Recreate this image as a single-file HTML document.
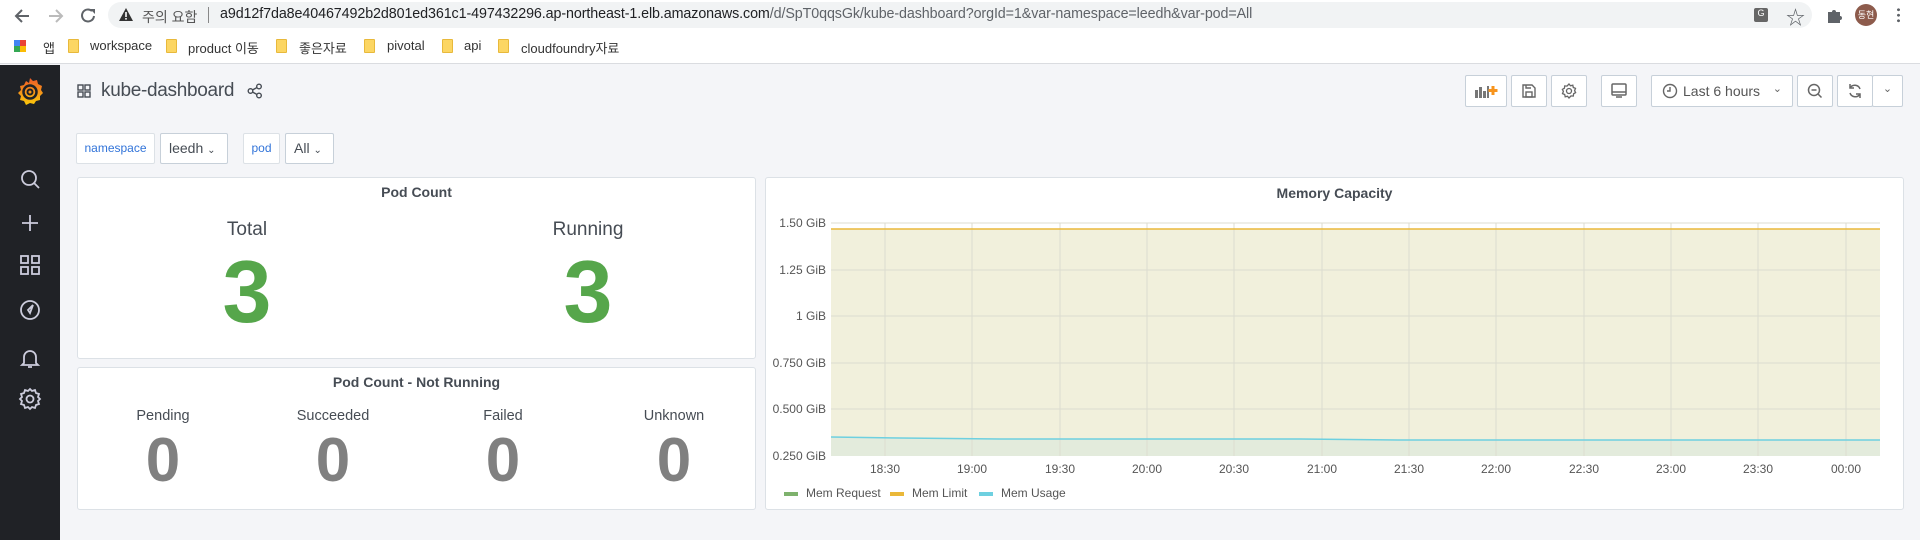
<!DOCTYPE html>
<html><head><meta charset="utf-8"><style>
*{margin:0;padding:0;box-sizing:border-box}
body{width:1920px;height:540px;overflow:hidden;background:#f4f5f8;font-family:"Liberation Sans","Noto Sans CJK KR",sans-serif;position:relative;color:#464c54}
.abs{position:absolute}
.btn{position:absolute;top:75px;height:32px;border:1px solid #c7d0d9;background:#fff;border-radius:2px;display:flex;align-items:center;justify-content:center}
.panel{position:absolute;background:#fff;border:1px solid #dce1e6;border-radius:3px}
.pt{position:absolute;left:0;right:0;text-align:center;font-size:14px;font-weight:bold;color:#464c54}
.c{position:absolute;transform:translateX(-50%);text-align:center;white-space:nowrap}
.bm{position:absolute;top:38px;font-size:13px;color:#333}
.fold{position:absolute;top:39px;width:11px;height:14px;background:#fcd663;border:1px solid #e8b93b;border-radius:1px}
</style></head><body>
<!-- chrome top -->
<div class="abs" style="left:0;top:0;width:1920px;height:64px;background:#fff;border-bottom:1px solid #dadce0"></div>
<svg class="abs" style="left:12px;top:6px" width="100" height="20" viewBox="0 0 100 20"><path d="M17 10H4M10 4l-6 6 6 6" stroke="#5f6368" stroke-width="2" fill="none"/><path d="M37 10h13M44 4l6 6-6 6" stroke="#bbb" stroke-width="2" fill="none"/><path d="M80 5a6 6 0 1 0 2 5" stroke="#5f6368" stroke-width="2" fill="none"/><path d="M78 3h5v5z" fill="#5f6368"/></svg>
<div class="abs" style="left:108px;top:2px;width:1704px;height:26px;background:#f1f3f4;border-radius:13px"></div>
<svg class="abs" style="left:119px;top:8px" width="14" height="13"><path d="M7 0L14 13H0z" fill="#333"/><rect x="6.2" y="4" width="1.6" height="5" fill="#fff"/><rect x="6.2" y="10" width="1.6" height="1.6" fill="#fff"/></svg>
<div class="abs" style="left:142px;top:7px;font-size:14px;color:#555">주의 요함</div>
<div class="abs" style="left:208px;top:7px;width:1px;height:16px;background:#888"></div>
<div class="abs" style="left:220px;top:6px;font-size:14.3px;letter-spacing:-0.1px;color:#202124">a9d12f7da8e40467492b2d801ed361c1-497432296.ap-northeast-1.elb.amazonaws.com<span style="color:#5f6368">/d/SpT0qqsGk/kube-dashboard?orgId=1&amp;var-namespace=leedh&amp;var-pod=All</span></div>
<div class="abs" style="left:1754px;top:8px;width:14px;height:14px;background:#666;border-radius:2px;color:#fff;font-size:9px;text-align:center">G</div>
<div class="abs" style="left:1786px;top:3px;font-size:19px;color:#5f6368">☆</div>
<svg class="abs" style="left:1826px;top:7px" width="16" height="16"><path d="M2 5h4a2 2 0 1 1 4 0h4v4a2 2 0 1 1 0 4v3H2z" fill="#5f6368"/></svg>
<div class="abs" style="left:1855px;top:4px;width:22px;height:22px;border-radius:50%;background:#8d5b4c;color:#fff;font-size:9px;text-align:center;line-height:22px">동현</div>
<div class="abs" style="left:1897px;top:7px;width:3px;height:16px;background:radial-gradient(circle,#5f6368 1.3px,transparent 1.6px) 0 0/3px 5.5px"></div>
<!-- bookmarks -->
<div class="abs" style="left:14px;top:40px;width:12px;height:12px;background:conic-gradient(#ea4335 0 25%,#fbbc05 0 50%,#34a853 0 75%,#4285f4 0);"></div>
<div class="bm" style="left:43px">앱</div>
<div class="fold" style="left:68px"></div><div class="bm" style="left:90px">workspace</div>
<div class="fold" style="left:166px"></div><div class="bm" style="left:188px">product 이동</div>
<div class="fold" style="left:276px"></div><div class="bm" style="left:299px">좋은자료</div>
<div class="fold" style="left:364px"></div><div class="bm" style="left:387px">pivotal</div>
<div class="fold" style="left:442px"></div><div class="bm" style="left:464px">api</div>
<div class="fold" style="left:498px"></div><div class="bm" style="left:521px">cloudfoundry자료</div>
<!-- sidebar -->
<div class="abs" style="left:0;top:65px;width:60px;height:475px;background:#202226"></div>
<svg class="abs" style="left:16px;top:77px" width="28" height="28" viewBox="0 0 28 28"><defs><linearGradient id="g" x1="0" y1="1" x2="0" y2="0"><stop offset="0" stop-color="#fbca0a"/><stop offset="1" stop-color="#f05a28"/></linearGradient></defs><path d="M14 1l3 3 4-1 1 4 4 2-1 4 2 3-3 3v4l-4 1-2 3-4-1-4 2-2-4-4-1 1-4-3-3 3-3-1-4 4-1 2-4 3 2z" fill="url(#g)"/><circle cx="14" cy="15" r="6.5" fill="none" stroke="#202226" stroke-width="2.5"/><circle cx="14" cy="15" r="2.5" fill="none" stroke="#202226" stroke-width="2"/></svg>
<svg class="abs" style="left:18px;top:167px" width="26" height="250" viewBox="0 0 26 250" fill="none" stroke="#ccccdc" stroke-width="1.8">
<circle cx="11" cy="11" r="7"/><path d="M16 16l5 5"/>
<path d="M12 48v16M4 56h16"/>
<rect x="3" y="89" width="7" height="7"/><rect x="14" y="89" width="7" height="7"/><rect x="3" y="100" width="7" height="7"/><rect x="14" y="100" width="7" height="7"/>
<circle cx="12" cy="143" r="9"/><path d="M15 138l-3 8-2-3z"/>
<path d="M6 196v-6a6 6 0 0 1 12 0v6l2 2H4zM10 200h4"/>
<circle cx="12" cy="232" r="3.5"/><path d="M12 222l2 2 3-1 1 3 3 1-1 3 2 2-2 2 1 3-3 1-1 3-3-1-2 2-2-2-3 1-1-3-3-1 1-3-2-2 2-2-1-3 3-1 1-3 3 1z"/>
</svg>
<!-- title -->
<svg class="abs" style="left:77px;top:84px" width="14" height="14" fill="none" stroke="#464c54" stroke-width="1.4"><rect x="1" y="1" width="5" height="5"/><rect x="8" y="1" width="5" height="5"/><rect x="1" y="8" width="5" height="5"/><rect x="8" y="8" width="5" height="5"/></svg>
<div class="abs" style="left:101px;top:80px;font-size:19px;letter-spacing:-0.3px;color:#464c54">kube-dashboard</div>
<svg class="abs" style="left:247px;top:83px" width="16" height="16" fill="none" stroke="#464c54" stroke-width="1.4"><circle cx="12" cy="3.5" r="2.3"/><circle cx="3.5" cy="8" r="2.3"/><circle cx="12" cy="12.5" r="2.3"/><path d="M5.5 7l4.5-2.5M5.5 9l4.5 2.5"/></svg>
<!-- toolbar -->
<div class="btn" style="left:1465px;width:42px"><svg width="24" height="16"><rect x="1" y="7" width="3" height="8" fill="#777"/><rect x="5" y="4" width="3" height="11" fill="#777"/><rect x="9" y="8" width="3" height="7" fill="#777"/><rect x="13" y="3" width="2" height="12" fill="#777"/><path d="M19 3v9M14.5 7.5h9" stroke="#f7941d" stroke-width="3"/></svg></div>
<div class="btn" style="left:1511px;width:36px"><svg width="16" height="16" fill="none" stroke="#666" stroke-width="1.4"><path d="M2 2h9l3 3v9H2z"/><rect x="5" y="9" width="6" height="5"/><path d="M5 2v3h5"/></svg></div>
<div class="btn" style="left:1551px;width:36px"><svg width="16" height="16" fill="none" stroke="#666" stroke-width="1.3"><circle cx="8" cy="8" r="2.5"/><path d="M8 1l1.5 1.8 2.3-.6.5 2.3 2.2.9-.9 2.2 1 2-2 1.2-.3 2.3-2.3-.2L8 15l-1.5-1.8-2.3.6-.5-2.3-2.2-.9.9-2.2-1-2 2-1.2.3-2.3 2.3.2z"/></svg></div>
<div class="btn" style="left:1601px;width:36px"><svg width="18" height="16" fill="none" stroke="#666" stroke-width="1.5"><rect x="2" y="1" width="14" height="11" rx="1"/><path d="M2 9h14M6 14h6"/></svg></div>
<div class="btn" style="left:1651px;width:142px;justify-content:flex-start;padding-left:10px"><svg width="16" height="16" fill="none" stroke="#666" stroke-width="1.4"><circle cx="8" cy="8" r="6.5"/><path d="M8 4v4H5"/></svg><span style="font-size:14px;color:#555;margin-left:5px">Last 6 hours</span><span style="position:absolute;right:10px;top:6px;font-size:11px;color:#666">&#8964;</span></div>
<div class="btn" style="left:1797px;width:36px"><svg width="16" height="16" fill="none" stroke="#666" stroke-width="1.5"><circle cx="7" cy="7" r="5.5"/><path d="M4.5 7h5M11 11l3.5 3.5"/></svg></div>
<div class="btn" style="left:1837px;width:36px"><svg width="16" height="16" fill="none" stroke="#666" stroke-width="1.5"><path d="M13 6A5.5 5.5 0 0 0 3 5M3 10a5.5 5.5 0 0 0 10 1"/><path d="M3 1v4h4M13 15v-4H9"/></svg></div>
<div class="btn" style="left:1872px;width:31px"><span style="font-size:11px;color:#666;margin-top:-6px">&#8964;</span></div>
<!-- filters -->
<div class="abs" style="left:76px;top:133px;width:79px;height:31px;border:1px solid #dce1e6;background:#fff;border-radius:2px;font-size:12px;color:#3274d9;text-align:center;line-height:29px">namespace</div>
<div class="abs" style="left:160px;top:133px;width:68px;height:31px;border:1px solid #c7d0d9;background:#fff;border-radius:2px;font-size:14px;color:#464c54;line-height:29px;padding-left:8px">leedh <span style="font-size:10px">&#8964;</span></div>
<div class="abs" style="left:243px;top:133px;width:37px;height:31px;border:1px solid #dce1e6;background:#fff;border-radius:2px;font-size:12px;color:#3274d9;text-align:center;line-height:29px">pod</div>
<div class="abs" style="left:285px;top:133px;width:49px;height:31px;border:1px solid #c7d0d9;background:#fff;border-radius:2px;font-size:14px;color:#464c54;line-height:29px;padding-left:8px">All <span style="font-size:10px">&#8964;</span></div>
<!-- Pod Count -->
<div class="panel" style="left:77px;top:177px;width:679px;height:182px">
<div class="pt" style="top:6px">Pod Count</div>
<div class="c" style="left:169px;top:41px;font-size:19px">Total</div>
<div class="c" style="left:510px;top:41px;font-size:19px">Running</div>
<div class="c" style="left:169px;top:63px;font-size:88px;font-weight:bold;color:#56a64b">3</div>
<div class="c" style="left:510px;top:63px;font-size:88px;font-weight:bold;color:#56a64b">3</div>
</div>
<div class="panel" style="left:77px;top:367px;width:679px;height:143px">
<div class="pt" style="top:6px">Pod Count - Not Running</div>
<div class="c" style="left:85px;top:40px;font-size:14.5px">Pending</div>
<div class="c" style="left:255px;top:40px;font-size:14.5px">Succeeded</div>
<div class="c" style="left:425px;top:40px;font-size:14.5px">Failed</div>
<div class="c" style="left:596px;top:40px;font-size:14.5px">Unknown</div>
<div class="c" style="left:85px;top:57px;font-size:62px;font-weight:bold;color:#808080">0</div>
<div class="c" style="left:255px;top:57px;font-size:62px;font-weight:bold;color:#808080">0</div>
<div class="c" style="left:425px;top:57px;font-size:62px;font-weight:bold;color:#808080">0</div>
<div class="c" style="left:596px;top:57px;font-size:62px;font-weight:bold;color:#808080">0</div>
</div>
<!-- Memory -->
<div class="panel" style="left:765px;top:177px;width:1139px;height:333px">
<div class="pt" style="top:7px">Memory Capacity</div>
</div>
<svg class="abs" style="left:765px;top:177px" width="1139" height="333" font-family="Liberation Sans, sans-serif" font-size="12" fill="#555">
<g transform="translate(-765,-177)">
<rect x="831" y="229" width="1049" height="227" fill="#f1f0dc"/>
<path d="M831 437 L900 438 L1000 439 L1300 439 L1400 440 L1880 440 L1880 456 L831 456z" fill="#e3ebdc"/>
<g stroke="#dcdcd0" stroke-width="1">
<path d="M831 223H1880M831 270H1880M831 316H1880M831 363H1880M831 409H1880"/>
<path d="M885 223V456M972 223V456M1060 223V456M1147 223V456M1234 223V456M1322 223V456M1409 223V456M1496 223V456M1584 223V456M1671 223V456M1758 223V456M1846 223V456"/>
</g>
<path d="M831 229H1880" stroke="#eab839" stroke-width="1.5"/>
<path d="M831 437 L900 438 L1000 439 L1300 439 L1400 440 L1880 440" stroke="#6ed0e0" stroke-width="1.5" fill="none"/>
<g text-anchor="end"><text x="826" y="227">1.50 GiB</text><text x="826" y="274">1.25 GiB</text><text x="826" y="320">1 GiB</text><text x="826" y="367">0.750 GiB</text><text x="826" y="413">0.500 GiB</text><text x="826" y="460">0.250 GiB</text></g>
<g text-anchor="middle"><text x="885" y="473">18:30</text><text x="972" y="473">19:00</text><text x="1060" y="473">19:30</text><text x="1147" y="473">20:00</text><text x="1234" y="473">20:30</text><text x="1322" y="473">21:00</text><text x="1409" y="473">21:30</text><text x="1496" y="473">22:00</text><text x="1584" y="473">22:30</text><text x="1671" y="473">23:00</text><text x="1758" y="473">23:30</text><text x="1846" y="473">00:00</text></g>
<rect x="784" y="492" width="14" height="4" fill="#7eb26d"/><text x="806" y="497">Mem Request</text>
<rect x="890" y="492" width="14" height="4" fill="#eab839"/><text x="912" y="497">Mem Limit</text>
<rect x="979" y="492" width="14" height="4" fill="#6ed0e0"/><text x="1001" y="497">Mem Usage</text>
</g></svg>
</body></html>
